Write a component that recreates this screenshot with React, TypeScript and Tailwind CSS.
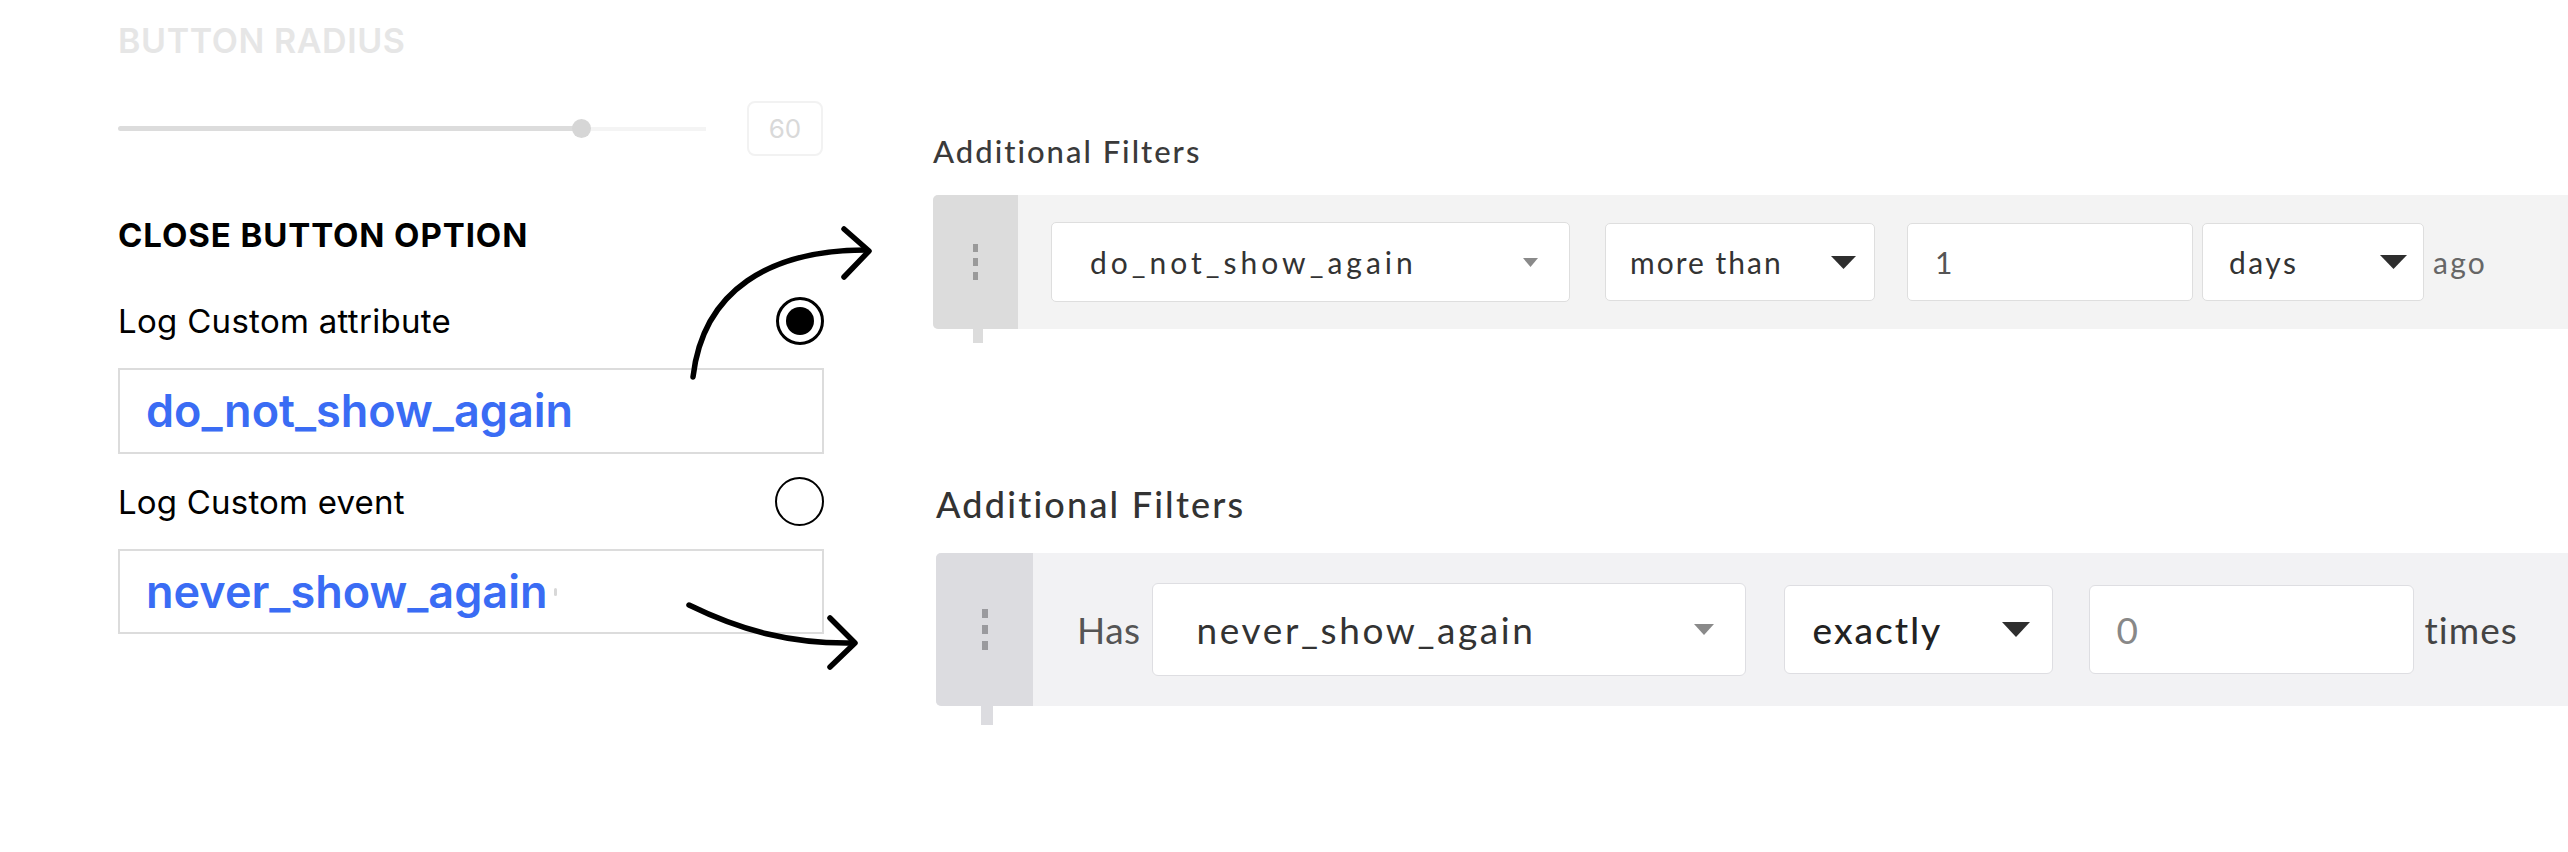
import React from "react";

function Caret({ w, h, color }: { w: number; h: number; color: string }) {
  return (
    <svg width={w} height={h} viewBox={`0 0 ${w} ${h}`} className="shrink-0">
      <polygon points={`0,0 ${w},0 ${w / 2},${h}`} fill={color} />
    </svg>
  );
}

function Radio({ checked }: { checked: boolean }) {
  return (
    <div
      className={
        checked
          ? "w-[48px] h-[48px] rounded-full border-[3px] border-black flex items-center justify-center"
          : "w-[49px] h-[49px] rounded-full border-[2.5px] border-black"
      }
    >
      {checked && <div className="w-[28px] h-[28px] rounded-full bg-black" />}
    </div>
  );
}

function LeftPanel() {
  return (
    <div className="w-[824px] shrink-0 pl-[118px] pt-[21px] flex flex-col font-['Inter',sans-serif]">
      <div className="text-[34px] leading-[40px] font-semibold tracking-[0.6px] text-[#e6e6e6]">BUTTON RADIUS</div>

      <div className="mt-[40px] h-[55px] flex items-center">
        <div className="relative w-[588px] h-[19px] flex items-center">
          <div className="h-[5px] w-[463px] bg-[#dcdcdc] rounded-full" />
          <div className="h-[4px] flex-1 bg-[#f4f4f4]" />
          <div className="absolute left-[454px] top-0 w-[19px] h-[19px] rounded-full bg-[#d6d6d6]" />
        </div>
        <div className="ml-[41px] w-[76px] h-[55px] border-2 border-[#f2f2f2] rounded-[8px] flex items-center justify-center text-[26px] text-[#d9d9d9]">
          60
        </div>
      </div>

      <div className="mt-[60px] text-[33px] leading-[39px] font-bold tracking-[0.9px] text-black">CLOSE BUTTON OPTION</div>

      <div className="mt-[42px] h-[48px] flex items-center justify-between">
        <span className="text-[33px] leading-[40px] tracking-[0.3px] text-black">Log Custom attribute</span>
        <Radio checked />
      </div>
      <div className="mt-[23px] h-[86px] border-2 border-[#dcdcdc] pl-[26px] flex items-center text-[45px] leading-[54px] font-semibold text-[#3a6cf4]">
        do_not_show_again
      </div>

      <div className="mt-[23px] h-[49px] flex items-center justify-between">
        <span className="text-[33px] leading-[40px] tracking-[0.2px] text-black">Log Custom event</span>
        <Radio checked={false} />
      </div>
      <div className="mt-[23px] h-[85px] border-2 border-[#dcdcdc] pl-[26px] flex items-center text-[45px] leading-[54px] font-semibold text-[#3a6cf4]">
        never_show_again
        <span className="ml-[7px] w-[3px] h-[8px] bg-[#d8d8d8] rounded-full" />
      </div>
    </div>
  );
}

function Dots({ w, h, gap, color }: { w: number; h: number; gap: number; color: string }) {
  return (
    <div className="flex flex-col items-center" style={{ gap }}>
      {[0, 1, 2].map((i) => (
        <div key={i} style={{ width: w, height: h, backgroundColor: color }} />
      ))}
    </div>
  );
}

function RightPanel() {
  return (
    <div className="ml-[109px] flex-1 flex flex-col pt-[133px] font-['Lato',sans-serif] text-[#333]">
      <div className="text-[31px] leading-[37px] font-medium tracking-[2px] text-[#3a3a3a]">Additional Filters</div>

      <div className="mt-[25px] h-[134px] flex bg-[#f3f3f3] rounded-l-[5px]">
        <div className="w-[85px] shrink-0 bg-[#dcdcdc] rounded-l-[5px] flex items-center justify-center">
          <Dots w={5} h={8} gap={6} color="#9a9a9a" />
        </div>
        <div className="flex items-center pl-[33px] text-[30px]">
          <div className="w-[519px] h-[80px] bg-white border border-[#dedede] rounded-[5px] pl-[38px] pr-[31px] flex items-center justify-between">
            <span className="tracking-[4px] text-[#333]">do_not_show_again</span>
            <Caret w={15} h={9} color="#8a8a8a" />
          </div>
          <div className="ml-[35px] w-[270px] h-[78px] bg-white border border-[#dedede] rounded-[5px] pl-[24px] pr-[18px] flex items-center justify-between">
            <span className="tracking-[2px] text-[#333]">more than</span>
            <Caret w={25} h={13} color="#2e2e2e" />
          </div>
          <div className="ml-[32px] w-[286px] h-[78px] bg-white border border-[#dedede] rounded-[5px] pl-[27px] flex items-center">
            <span className="text-[#555]">1</span>
          </div>
          <div className="ml-[9px] w-[222px] h-[78px] bg-white border border-[#dedede] rounded-[5px] pl-[26px] pr-[16px] flex items-center justify-between">
            <span className="tracking-[2.5px] text-[#333]">days</span>
            <Caret w={27} h={14} color="#2e2e2e" />
          </div>
          <span className="ml-[9px] tracking-[2.3px] text-[#666]">ago</span>
        </div>
      </div>
      <div className="ml-[40px] w-[10px] h-[14px] bg-[#dcdcdc]" />

      <div className="ml-[3px] mt-[140px] text-[36px] leading-[43px] font-medium tracking-[2.2px] text-[#333]">Additional Filters</div>

      <div className="ml-[3px] mt-[27px] h-[153px] flex bg-[#f2f2f4] rounded-l-[5px]">
        <div className="w-[97px] shrink-0 bg-[#dcdce0] rounded-l-[5px] flex items-center justify-center">
          <Dots w={6} h={9} gap={7} color="#9a9a9e" />
        </div>
        <div className="flex items-center pl-[44px] text-[37px]">
          <span className="text-[#555] tracking-[0.5px]">Has</span>
          <div className="ml-[11px] w-[594px] h-[93px] bg-white border border-[#dedee2] rounded-[6px] pl-[44px] pr-[31px] flex items-center justify-between">
            <span className="tracking-[2.6px] text-[#333]">never_show_again</span>
            <Caret w={20} h={11} color="#8a8a8a" />
          </div>
          <div className="ml-[38px] w-[269px] h-[89px] bg-white border border-[#dedee2] rounded-[6px] pl-[28px] pr-[22px] flex items-center justify-between">
            <span className="tracking-[2px] font-medium text-[#222]">exactly</span>
            <Caret w={28} h={15} color="#2e2e2e" />
          </div>
          <div className="ml-[36px] w-[325px] h-[89px] bg-white border border-[#dedee2] rounded-[6px] pl-[27px] flex items-center">
            <span className="text-[#888]">0</span>
          </div>
          <span className="ml-[11px] tracking-[1px] text-[#444]">times</span>
        </div>
      </div>
      <div className="ml-[48px] w-[12px] h-[19px] bg-[#dcdce0]" />
    </div>
  );
}

function Arrows() {
  return (
    <svg
      className="absolute inset-0 pointer-events-none"
      width={2568}
      height={852}
      viewBox="0 0 2568 852"
      fill="none"
      stroke="black"
      strokeWidth={5.5}
      strokeLinecap="round"
      strokeLinejoin="round"
    >
      <path d="M693 377 C703 290 770 250 866 250" />
      <path d="M844 229 L869 251 L844 277" />
      <path d="M689 605 C740 630 790 644 853 643" />
      <path d="M830 618 L855 643 L830 667" />
    </svg>
  );
}

export default function App() {
  return (
    <div className="relative w-[2568px] h-[852px] bg-white overflow-hidden flex">
      <LeftPanel />
      <RightPanel />
      <Arrows />
    </div>
  );
}
